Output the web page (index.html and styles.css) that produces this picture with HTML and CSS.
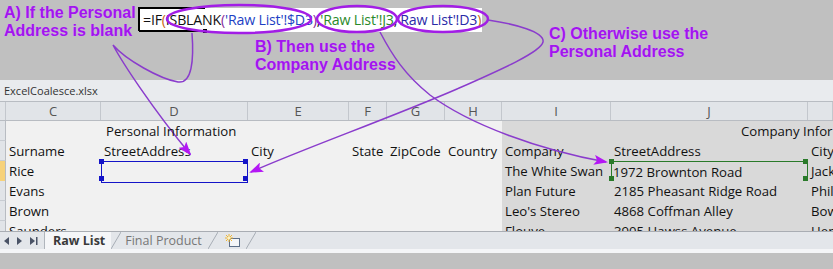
FILE: index.html
```html
<!DOCTYPE html>
<html lang="en">
<head>
    <meta charset="UTF-8">
    <title>ExcelCoalesce</title>
    <link rel="stylesheet" href="styles.css">
</head>
<body>
    <!-- Formula bar band with callouts -->
    <div class="top-band">
        <div class="formula-box">
            <span class="f-black">=IF<span class="f-orange">(</span>ISBLANK<span class="f-purple">(</span></span><span class="f-blue">'Raw List'!$D3</span><span class="f-purple">)</span>,<span class="f-green">'Raw List'!J3</span>,<span class="f-navy">'Raw List'!D3</span><span class="f-orange">)</span>
        </div>
        <div class="callout callout-a">A) If the Personal<br>Address is blank</div>
        <div class="callout callout-b">B) Then use the<br>Company Address</div>
        <div class="callout callout-c">C) Otherwise use the<br>Personal Address</div>
    </div>

    <!-- Workbook window -->
    <div class="workbook">
        <div class="title-bar">ExcelCoalesce.xlsx</div>

        <div class="col-headers">
            <div class="rh"></div>
            <div>C</div><div>D</div><div>E</div><div>F</div><div>G</div><div>H</div><div>I</div><div>J</div><div></div>
        </div>

        <div class="cells">
            <div class="row">
                <div class="rh"></div>
                <div></div><div class="pad5 front">Personal Information</div><div></div><div></div><div></div><div></div>
                <div class="dark"></div><div class="dark company-title front">Company Infor</div><div class="dark"></div>
            </div>
            <div class="row">
                <div class="rh"></div>
                <div>Surname</div><div>StreetAddress</div><div>City</div><div>State</div><div>ZipCode</div><div>Country</div>
                <div class="dark">Company</div><div class="dark">StreetAddress</div><div class="dark">City</div>
            </div>
            <div class="row">
                <div class="rh active"></div>
                <div>Rice</div><div class="sel sel-blue"></div><div></div><div></div><div></div><div></div>
                <div class="dark">The White Swan</div><div class="dark sel sel-green">1972 Brownton Road</div><div class="dark">Jack</div>
            </div>
            <div class="row">
                <div class="rh"></div>
                <div>Evans</div><div></div><div></div><div></div><div></div><div></div>
                <div class="dark">Plan Future</div><div class="dark">2185 Pheasant Ridge Road</div><div class="dark">Phil</div>
            </div>
            <div class="row">
                <div class="rh"></div>
                <div>Brown</div><div></div><div></div><div></div><div></div><div></div>
                <div class="dark">Leo's Stereo</div><div class="dark">4868 Coffman Alley</div><div class="dark">Bow</div>
            </div>
            <div class="row">
                <div class="rh"></div>
                <div class="front">Saunders</div><div></div><div></div><div></div><div></div><div></div>
                <div class="dark">Flouve</div><div class="dark">3905 Hawss Avenue</div><div class="dark">Hen</div>
            </div>
        </div>

        <div class="tab-bar">
            <div class="tab-nav">
                <svg width="38" height="10" viewBox="0 0 38 10">
                    <path d="M6 1 L1 5 L6 9 Z" fill="#4a5366"/>
                    <path d="M14 1 L19 5 L14 9 Z" fill="#4a5366"/>
                    <path d="M27 1 L32 5 L27 9 Z" fill="#4a5366"/>
                    <rect x="33" y="1" width="1.5" height="8" fill="#4a5366"/>
                </svg>
            </div>
            <div class="tab tab-active">Raw List</div>
            <svg class="slash" width="10" height="17" viewBox="0 0 10 17"><path d="M0 17 L10 0" stroke="#a7adb5"/></svg>
            <div class="tab">Final Product</div>
            <svg class="slash" width="10" height="17" viewBox="0 0 10 17"><path d="M0 17 L10 0" stroke="#a7adb5"/></svg>
            <div class="tab tab-new">
                <svg width="18" height="14" viewBox="0 0 18 14">
                    <rect x="5.5" y="4.5" width="10" height="8" fill="#f4f6f8" stroke="#5d6f88"/>
                    <path d="M5 0v8M1 4h8M2 1l6 6M8 1l-6 6" stroke="#f0b020" stroke-width="0.9"/>
                    <circle cx="5" cy="4" r="1.6" fill="#fff3c0"/>
                </svg>
            </div>
            <svg class="slash" width="10" height="17" viewBox="0 0 10 17"><path d="M0 17 L10 0" stroke="#a7adb5"/></svg>
        </div>
    </div>
    <div class="bottom-band"></div>

    <!-- Annotation strokes -->
    <svg class="overlay" width="833" height="269" viewBox="0 0 833 269">
        <defs>
            <marker id="head" markerWidth="14" markerHeight="10" refX="12" refY="5" orient="auto" markerUnits="userSpaceOnUse">
                <path d="M0 0 L14 5 L0 10 L3 5 Z" fill="#b417f5"/>
            </marker>
        </defs>
        <path d="M139 31 V8 H205 M139 31 H203" fill="none" stroke="#000" stroke-width="2"/>
        <rect x="203" y="29" width="4" height="4" fill="#000"/>

        <ellipse cx="239" cy="19" rx="72" ry="14" fill="none" stroke="#a21de6" stroke-width="2.5"/>
        <ellipse cx="357" cy="19" rx="40" ry="13" fill="none" stroke="#a21de6" stroke-width="2.5"/>
        <ellipse cx="443" cy="19" rx="45" ry="13" fill="none" stroke="#a21de6" stroke-width="2.5"/>

        <path d="M192 33 C194 60 192 84 178 82 C160 79 126 60 113 45 C122 62 152 108 190 154" fill="none" stroke="#8a3ccc" stroke-width="1.5" marker-end="url(#head)"/>
        <path d="M380 32 C392 55 405 75 430 95 C470 125 540 150 606 162" fill="none" stroke="#8a3ccc" stroke-width="1.5" marker-end="url(#head)"/>
        <path d="M488 20 C515 24 545 32 543 42 C541 52 500 70 457 89 C390 118 300 150 251 172" fill="none" stroke="#8a3ccc" stroke-width="1.5" marker-end="url(#head)"/>
    </svg>
</body>
</html>
```

FILE: styles.css
```css
* {
    box-sizing: border-box;
    margin: 0;
    padding: 0;
}

body {
    width: 833px;
    height: 269px;
    overflow: hidden;
    position: relative;
    background-color: #c0c0c0;
    font-family: 'Open Sans', 'Noto Sans', sans-serif;
    color: #111;
}

/* Top band */
.top-band {
    position: relative;
    height: 80px;
    padding: 8px 0 0 140px;
}

.formula-box {
    width: 342px;
    height: 24px;
    background-color: #ffffff;
    font-size: 14.2px;
    line-height: 24px;
    padding-left: 3px;
    white-space: nowrap;
    letter-spacing: -0.2px;
}

.f-orange { color: #c86414; }
.f-purple { color: #8a2a9a; }
.f-blue { color: #1d3fc4; }
.f-green { color: #2a8a2a; }
.f-navy { color: #2a2aa8; }

.callout {
    position: absolute;
    font-family: 'Liberation Sans', Arial, sans-serif;
    font-weight: bold;
    font-size: 16px;
    line-height: 18px;
    color: #a215ee;
    text-shadow: 0 0 1px #d9a6f5;
}

.callout-a { left: 4px; top: 4px; }
.callout-b { left: 255px; top: 38px; }
.callout-c { left: 549px; top: 25px; }

/* Workbook */
.workbook {
    background-color: #f1f1f1;
}

.title-bar {
    height: 21px;
    background-color: #e9ebee;
    font-size: 11px;
    line-height: 21px;
    padding-left: 4px;
    color: #333;
}

.col-headers,
.row {
    display: grid;
    grid-template-columns: 6px 95px 147px 101px 38px 58px 57px 109px 197px 25px;
}

.col-headers {
    height: 20px;
    background-color: #e1e4e8;
    border-top: 1px solid #b8bcc2;
    border-bottom: 1px solid #b8bcc2;
}

.col-headers div {
    text-align: center;
    font-size: 13px;
    line-height: 18px;
    color: #555;
    border-right: 1px solid #c3c7cd;
}

.cells {
    height: 110px;
    overflow: hidden;
}

.row {
    height: 20px;
}

.row div {
    font-size: 13.2px;
    line-height: 20px;
    padding-left: 3px;
    white-space: nowrap;
    overflow: visible;
    position: relative;
}

.row .front {
    z-index: 1;
}

.row .rh {
    background-color: #e1e4e8;
    border-right: 1px solid #b8bcc2;
    border-bottom: 1px solid #c8ccd2;
}

.row .rh.active {
    background-color: #f7d27a;
}

.row .dark {
    background-color: #d9d9d9;
}

.row .pad5 {
    padding-left: 5px;
}

.row .company-title {
    padding-left: 130px;
}

/* Selection boxes */
.sel-blue {
    border: 1.5px solid #1414c8;
}

.sel-green {
    border: 1.5px solid #2a7a2a;
}

.sel::before {
    content: '';
    position: absolute;
    width: 5px;
    height: 5px;
    top: -3px;
    left: -3px;
}

.sel-blue::before {
    background-color: #1414c8;
    box-shadow: 144px 0 0 #1414c8, 0 17px 0 #1414c8, 144px 17px 0 #1414c8;
}

.sel-green::before {
    background-color: #2a7a2a;
    box-shadow: 194px 0 0 #2a7a2a, 0 17px 0 #2a7a2a, 194px 17px 0 #2a7a2a;
}

.row .sel-green {
    padding-left: 1px;
}

/* Sheet tabs */
.tab-bar {
    height: 22px;
    display: flex;
    align-items: center;
    background-color: #e3e6ea;
    border-top: 1px solid #a9adb3;
    border-bottom: 4px solid #f4f5f7;
}

.tab-nav {
    display: flex;
    align-items: center;
    height: 100%;
    width: 45px;
    padding-left: 3px;
    border-right: 1px solid #b0b5bc;
}

.tab {
    display: flex;
    align-items: center;
    height: 100%;
    padding: 0 6px 0 4px;
    font-size: 12.5px;
    color: #777;
}

.tab-active {
    background-color: #f5f6f8;
    font-weight: bold;
    color: #3a3a3a;
    padding: 0 6px 0 8px;
}

.tab-new {
    padding: 0 4px 0 6px;
}

.slash {
    align-self: flex-end;
}

.bottom-band {
    height: 16px;
    background-color: #c0c0c0;
}

.overlay {
    position: absolute;
    left: 0;
    top: 0;
    pointer-events: none;
}
```
